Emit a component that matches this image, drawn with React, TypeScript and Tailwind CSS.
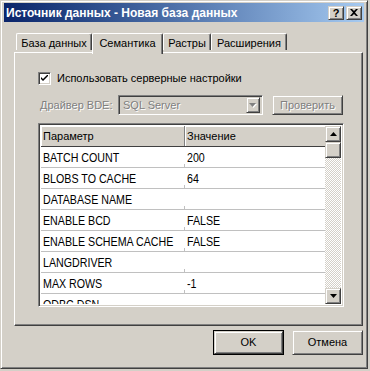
import React from "react";

const raised2 =
  "bg-[#d4d0c8] border border-t-[#d4d0c8] border-l-[#d4d0c8] border-r-[#404040] border-b-[#404040] shadow-[inset_1px_1px_0_#fff,inset_-1px_-1px_0_#808080]";
const sunken =
  "border border-t-[#808080] border-l-[#808080] border-r-white border-b-white shadow-[inset_1px_1px_0_#404040,inset_-1px_-1px_0_#d4d0c8]";

const rows: [string, string][] = [
  ["BATCH COUNT", "200"],
  ["BLOBS TO CACHE", "64"],
  ["DATABASE NAME", ""],
  ["ENABLE BCD", "FALSE"],
  ["ENABLE SCHEMA CACHE", "FALSE"],
  ["LANGDRIVER", ""],
  ["MAX ROWS", "-1"],
  ["ODBC DSN", ""],
];

function Tab({ label, w, selected }: { label: string; w: string; selected?: boolean }) {
  if (selected) {
    return (
      <div
        className={`${w} h-[21px] bg-[#d4d0c8] border-t border-l border-r border-t-white border-l-white border-r-[#404040] rounded-t-[2px] shadow-[inset_-1px_0_0_#808080] flex justify-center pt-[2px] relative z-10`}
      >
        <span className="leading-[14px]">{label}</span>
      </div>
    );
  }
  return (
    <div
      className={`${w} h-[17px] mb-[4px] bg-[#d4d0c8] border-t border-l border-r border-t-white border-l-white border-r-[#404040] rounded-t-[2px] shadow-[inset_-1px_0_0_#808080] flex justify-center pt-[2px]`}
    >
      <span className="leading-[14px]">{label}</span>
    </div>
  );
}

function Arrow({ up }: { up?: boolean }) {
  return (
    <svg width="7" height="4" viewBox="0 0 7 4" className="block">
      {up ? (
        <path d="M3.5 0 L7 4 L0 4 Z" fill="#000" />
      ) : (
        <path d="M0 0 L7 0 L3.5 4 Z" fill="#000" />
      )}
    </svg>
  );
}

function Narrow({ children }: { children: React.ReactNode }) {
  return (
    <span className="inline-block origin-left scale-x-[0.82] text-[13px] leading-[15px] whitespace-nowrap">
      {children}
    </span>
  );
}

export default function App() {
  return (
    <div className="w-[370px] h-[371px] bg-[#d4d0c8] font-['Liberation_Sans',Arial,sans-serif] text-[11px] text-black">
      <div className="w-[368px] h-[369px] border border-t-[#d4d0c8] border-l-[#d4d0c8] border-r-[#404040] border-b-[#404040] shadow-[inset_1px_1px_0_#fff,inset_-1px_-1px_0_#808080] pt-[2px] px-[3px] flex flex-col">
        {/* Title bar */}
        <div className="h-[19px] flex items-center bg-gradient-to-r from-[#0a246a] to-[#a6caf0] pl-[2px] pr-[2px]">
          <span className="flex-1 text-white font-bold text-[12px] leading-[18px] whitespace-nowrap">
            Источник данных - Новая база данных
          </span>
          <div className="flex gap-[2px]">
            <div className={`w-[16px] h-[14px] ${raised2} flex items-center justify-center`}>
              <span className="font-bold text-[11px] leading-[11px] mt-[1px]">?</span>
            </div>
            <div className={`w-[16px] h-[14px] ${raised2} flex items-center justify-center`}>
              <svg width="8" height="7" viewBox="0 0 8 7">
                <path d="M0 0h2l2 2 2-2h2L5 3.5 8 7H6L4 5 2 7H0l3-3.5z" fill="#000" />
              </svg>
            </div>
          </div>
        </div>

        {/* Tabs */}
        <div className="mt-[11px] h-[21px] flex items-start pl-[12px] relative z-10">
          <div className="flex items-end h-[21px]">
            <Tab label="База данных" w="w-[76px]" />
            <Tab label="Семантика" w="w-[71px]" selected />
            <Tab label="Растры" w="w-[48px]" />
            <Tab label="Расширения" w="w-[76px]" />
          </div>
        </div>

        {/* Panel */}
        <div className="-mt-[2px] ml-[10px] w-[349px] h-[274px] bg-[#d4d0c8] border border-t-white border-l-white border-r-[#404040] border-b-[#404040] shadow-[inset_-1px_-1px_0_#808080] pt-[19px] pl-[23px] flex flex-col">
          {/* checkbox */}
          <div className="flex items-center h-[13px]">
            <div className={`w-[13px] h-[13px] bg-white ${sunken} flex items-center justify-center`}>
              <svg width="7" height="7" viewBox="0 0 7 7">
                <path d="M0 2 L0 4 L2 6 L7 1 L7 -1 L2 4 Z" fill="#000" />
              </svg>
            </div>
            <span className="ml-[6px] leading-[13px]">Использовать серверные настройки</span>
          </div>

          {/* driver row */}
          <div className="mt-[10px] flex items-center h-[20px]">
            <span className="w-[80px] pl-[2px] text-[#808080] [text-shadow:1px_1px_0_#fff] whitespace-nowrap">
              Драйвер BDE:
            </span>
            <div className={`w-[145px] h-[20px] bg-[#d4d0c8] ${sunken} flex items-center p-[2px]`}>
              <span className="flex-1 pl-[2px] text-[#808080] [text-shadow:1px_1px_0_#fff]">SQL Server</span>
              <div className={`w-[14px] h-[16px] ${raised2} flex items-center justify-center`}>
                <svg width="8" height="5" viewBox="0 0 8 5" className="block">
                  <path d="M1 1 L8 1 L4.5 5 Z" fill="#fff" />
                  <path d="M0 0 L7 0 L3.5 4 Z" fill="#808080" />
                </svg>
              </div>
            </div>
            <div className={`ml-[9px] w-[71px] h-[20px] ${raised2} flex items-center justify-center`}>
              <span className="text-[#808080] [text-shadow:1px_1px_0_#fff]">Проверить</span>
            </div>
          </div>

          {/* grid */}
          <div className={`mt-[8px] w-[306px] h-[184px] bg-white ${sunken} p-[2px] flex`}>
            <div className="flex-1 flex flex-col overflow-hidden">
              <div className="h-[21px] flex bg-[#d4d0c8] border-b border-b-[#404040] shrink-0">
                <div className="w-[144px] border-r border-r-[#808080] shadow-[inset_1px_1px_0_#fff] pl-[2px] flex items-center">
                  Параметр
                </div>
                <div className="flex-1 shadow-[inset_1px_1px_0_#fff] pl-[2px] flex items-center">Значение</div>
              </div>
              {rows.map(([k, v]) => (
                <div key={k} className="h-[21px] shrink-0 flex border-b border-b-[#c0c0c0]">
                  <div className="w-[144px] pl-[2px] flex items-center relative overflow-hidden">
                    <Narrow>{k}</Narrow>
                    <span className="absolute right-0 bottom-0 w-px h-[3px] bg-[#c0c0c0]" />
                  </div>
                  <div className="flex-1 pl-[2px] flex items-center">
                    <Narrow>{v}</Narrow>
                  </div>
                </div>
              ))}
            </div>
            <div className="w-[16px] flex flex-col bg-[repeating-conic-gradient(#fff_0_25%,#d4d0c8_0_50%)] bg-[length:2px_2px]">
              <div className={`w-[16px] h-[16px] ${raised2} flex items-center justify-center`}>
                <Arrow up />
              </div>
              <div className={`w-[16px] h-[16px] ${raised2}`} />
              <div className="flex-1" />
              <div className={`w-[16px] h-[16px] ${raised2} flex items-center justify-center`}>
                <Arrow />
              </div>
            </div>
          </div>
        </div>

        {/* bottom buttons */}
        <div className="mt-[4px] mr-[1px] flex justify-end gap-[8px]">
          <div className="w-[71px] h-[25px] border border-black">
            <div className={`w-full h-full ${raised2} flex items-center justify-center`}>OK</div>
          </div>
          <div className={`w-[71px] h-[25px] ${raised2} flex items-center justify-center`}>Отмена</div>
        </div>
      </div>
    </div>
  );
}
